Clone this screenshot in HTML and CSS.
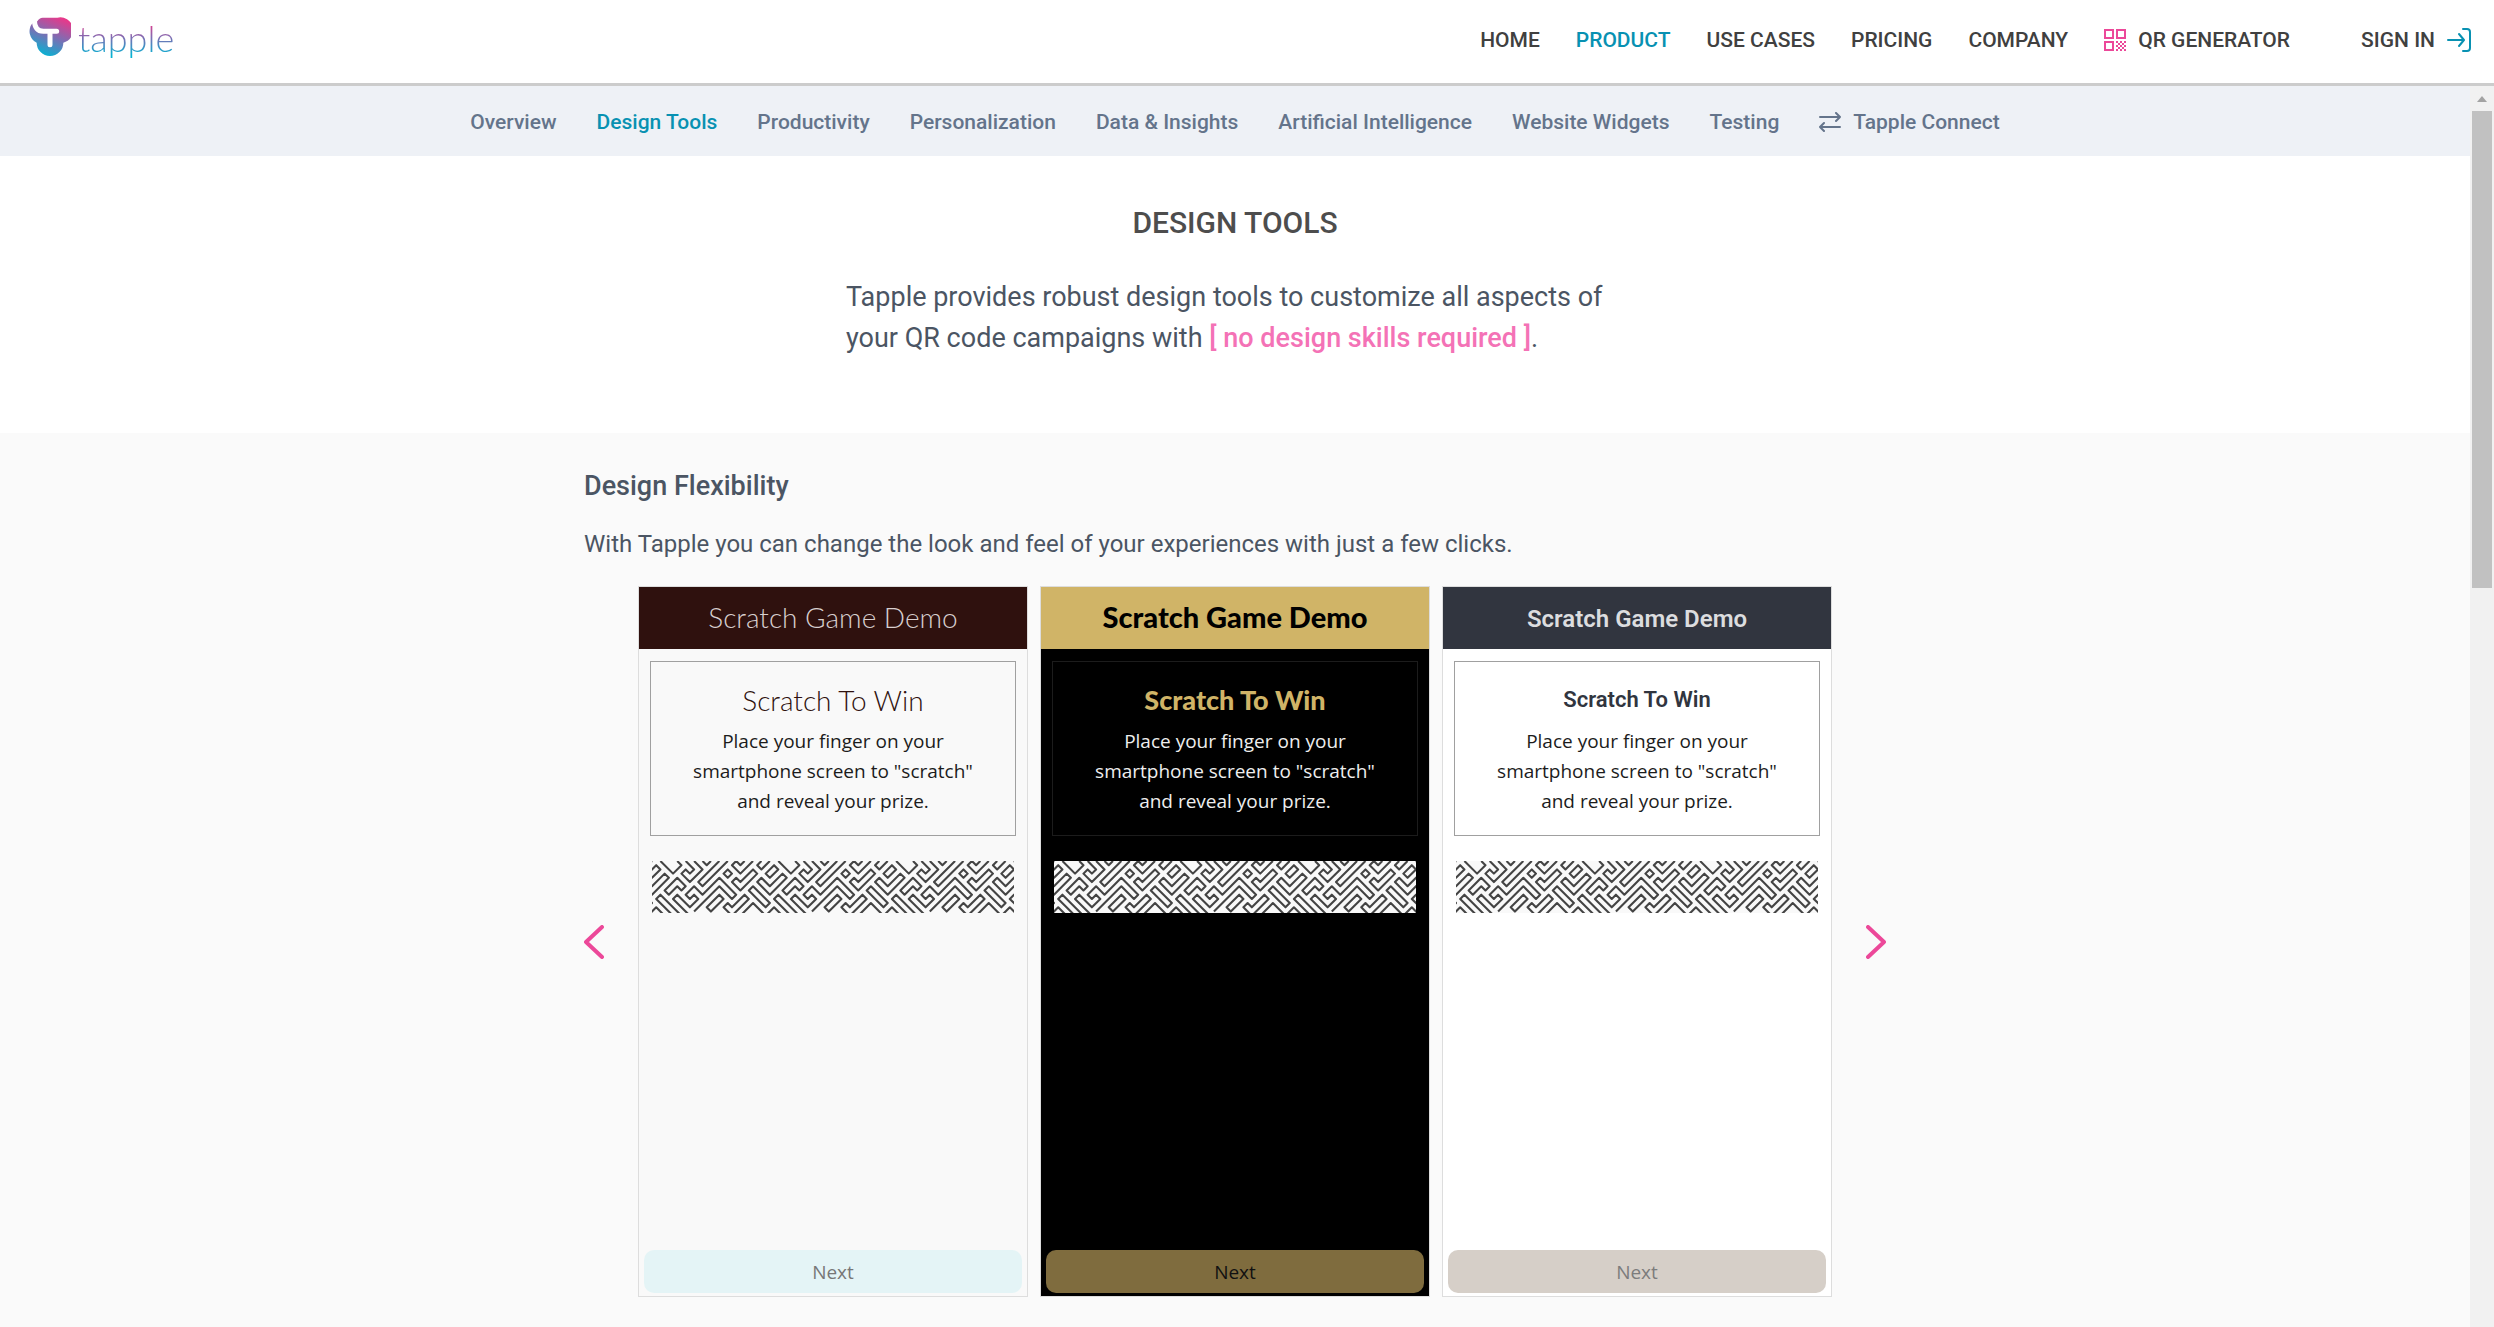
FILE: index.html
```html
<!DOCTYPE html>
<html lang="en">
<head>
<meta charset="utf-8">
<meta name="viewport" content="width=device-width, initial-scale=1">
<title>Tapple - Design Tools</title>
<link rel="stylesheet" href="styles.css">
</head>
<body>
<header class="topbar">
  <a class="brand" href="#" aria-label="tapple home">
    <svg class="brand-mark" viewBox="88 47 124 126" aria-hidden="true">
      <defs>
        <linearGradient id="brand-fill" x1="0.8" y1="0.05" x2="0.35" y2="1">
          <stop offset="0" stop-color="#e8388a"/>
          <stop offset="0.5" stop-color="#7a6fb4"/>
          <stop offset="1" stop-color="#05b3d3"/>
        </linearGradient>
      </defs>
      <path fill="url(#brand-fill)" d="M128 49H172A38 38 0 0 1 190 124A40 40 0 1 1 110 124A38 38 0 0 1 97 66L112 60Q118 49 128 49Z"/>
      <path fill="none" stroke="#fff" stroke-width="15" stroke-linecap="round" d="M103 56Q104 90 130 90H170M150 90V130"/>
    </svg>
    <span class="brand-name">tapple</span>
  </a>
  <nav class="main-nav" aria-label="Main">
    <a href="#">HOME</a>
    <a href="#" class="active">PRODUCT</a>
    <a href="#">USE CASES</a>
    <a href="#">PRICING</a>
    <a href="#">COMPANY</a>
    <a href="#" class="with-icon">
      <svg class="qr-icon" viewBox="0 0 22 22" aria-hidden="true">
        <path fill="none" stroke="#ec4899" stroke-width="2" d="M1 1H9V9H1ZM13 1H21V9H13ZM1 13H9V21H1Z"/>
        <path fill="#ec4899" d="M12 12h2v2h-2zM16 12h2v2h-2zM20 12h2v2h-2zM14 14h2v2h-2zM18 14h2v2h-2zM12 16h2v2h-2zM16 16h2v2h-2zM20 16h2v2h-2zM14 18h2v2h-2zM18 18h2v2h-2zM12 20h2v2h-2zM16 20h2v2h-2zM20 20h2v2h-2z"/>
      </svg>
      QR GENERATOR
    </a>
    <a href="#" class="with-icon sign-in">
      SIGN IN
      <svg class="sign-icon" viewBox="0 0 24 24" aria-hidden="true">
        <path fill="none" stroke="#0891b2" stroke-width="2" stroke-linecap="round" stroke-linejoin="round" d="M1 12H17M12 6L17 12L12 18M16 1H20Q23 1 23 4V20Q23 23 20 23H16"/>
      </svg>
    </a>
  </nav>
</header>

<div class="viewport">
  <main class="page">
    <nav class="sub-nav" aria-label="Product">
      <a href="#">Overview</a>
      <a href="#" class="active">Design Tools</a>
      <a href="#">Productivity</a>
      <a href="#">Personalization</a>
      <a href="#">Data &amp; Insights</a>
      <a href="#">Artificial Intelligence</a>
      <a href="#">Website Widgets</a>
      <a href="#">Testing</a>
      <a href="#" class="with-icon">
        <svg class="swap-icon" viewBox="0 0 22 20" aria-hidden="true">
          <path fill="none" stroke="currentColor" stroke-width="2" stroke-linecap="round" stroke-linejoin="round" d="M1 5H21M17 1L21 5L17 9M21 15H1M5 11L1 15L5 19"/>
        </svg>
        Tapple Connect
      </a>
    </nav>

    <section class="hero">
      <h1>DESIGN TOOLS</h1>
      <p>Tapple provides robust design tools to customize all aspects of your QR code campaigns with <strong>[ no design skills required ]</strong>.</p>
    </section>

    <section class="feature">
      <div class="feature-inner">
        <h2>Design Flexibility</h2>
        <p>With Tapple you can change the look and feel of your experiences with just a few clicks.</p>

        <svg class="defs" aria-hidden="true">
          <defs>
            <path id="maze-tile" d="M-16 -2L-13 1L-11 -1L-12 -2
              M-10 -2L-8 0L-9 1L-10 0L-11 1L-9 3L-6 0L-8 -2
              M-6 -2L-5 -1L-4 -2
              M-2 -2L-7 3L-6 4L0 -2
              M0 0L1 1L0 2L-1 1Z
              M4 -2L3 -1L2 -2L1 -1L3 1L6 -2
              M2 2L1 3L3 5L7 1L6 0L3 3Z
              M11 -1L9 1L10 2L12 0Z
              M8 -2L7 -1L8 0L10 -2
              M8 2L7 3L10 6L14 2L13 1L10 4Z
              M-12 2L-15 5L-14 6L-12 4L-11 5L-10 4Z
              M-8 10L-2 4L1 7L2 6L-2 2L-6 6L-8 4L-10 6L-9 7L-8 6L-7 7L-9 9L-12 6L-13 7L-9 11
              M-13 11L-17 7L-16 6L-11 11
              M-19 11L-17 9L-15 11
              M-5 9L-2 6L-1 7L-4 10Z
              M-1 9L0 8L1 9L4 6L5 7L1 11Z
              M5 5L6 4L10 8L9 9Z
              M3 11L6 8L9 11"/>
            <symbol id="maze" viewBox="0 0 86 13" preserveAspectRatio="xMinYMin slice">
              <g fill="none" stroke="#444" stroke-width="0.5" stroke-linejoin="round">
                <use href="#maze-tile" x="-10" y="2"/>
                <use href="#maze-tile" x="18" y="2"/>
                <use href="#maze-tile" x="46" y="2"/>
                <use href="#maze-tile" x="74" y="2"/>
                <use href="#maze-tile" x="102" y="2"/>
              </g>
            </symbol>
          </defs>
        </svg>

        <div class="carousel">
          <button type="button" class="arrow" aria-label="Previous">
            <svg viewBox="0 0 20 34" aria-hidden="true"><path d="M18 2L2 17L18 32"/></svg>
          </button>
          <div class="cards">
            <article class="card card-cocoa">
              <h3>Scratch Game Demo</h3>
              <div class="prompt">
                <h4>Scratch To Win</h4>
                <p>Place your finger on your smartphone screen to "scratch" and reveal your prize.</p>
              </div>
              <svg class="scratch" aria-hidden="true"><use href="#maze"/></svg>
              <button type="button" class="next">Next</button>
            </article>
            <article class="card card-gold">
              <h3>Scratch Game Demo</h3>
              <div class="prompt">
                <h4>Scratch To Win</h4>
                <p>Place your finger on your smartphone screen to "scratch" and reveal your prize.</p>
              </div>
              <svg class="scratch" aria-hidden="true"><use href="#maze"/></svg>
              <button type="button" class="next">Next</button>
            </article>
            <article class="card card-slate">
              <h3>Scratch Game Demo</h3>
              <div class="prompt">
                <h4>Scratch To Win</h4>
                <p>Place your finger on your smartphone screen to "scratch" and reveal your prize.</p>
              </div>
              <svg class="scratch" aria-hidden="true"><use href="#maze"/></svg>
              <button type="button" class="next">Next</button>
            </article>
          </div>
          <button type="button" class="arrow" aria-label="Next slide">
            <svg viewBox="0 0 20 34" aria-hidden="true"><path d="M2 2L18 17L2 32"/></svg>
          </button>
        </div>
      </div>
    </section>
  </main>
  <div class="scrollbar" aria-hidden="true">
    <span class="scroll-up"></span>
    <span class="scroll-thumb"></span>
  </div>
</div>
</body>
</html>
```

FILE: styles.css
```css
* {
  box-sizing: border-box;
}

body {
  margin: 0;
  height: 100vh;
  display: flex;
  flex-direction: column;
  overflow: hidden;
  font-family: Roboto, "Liberation Sans", sans-serif;
  color: #4b5563;
  background: #fff;
}

h1, h2, h3, h4, p {
  margin: 0;
}

a {
  color: inherit;
  text-decoration: none;
  white-space: nowrap;
}

button {
  border: 0;
  padding: 0;
  background: none;
  cursor: pointer;
}

/* Top bar */
.topbar {
  flex: none;
  display: flex;
  align-items: center;
  justify-content: space-between;
  height: 86px;
  padding: 0 23px 4px 29px;
  border-bottom: 3px solid #ccc;
}

.brand {
  display: flex;
  align-items: center;
  gap: 7px;
  padding-bottom: 4px;
}

.brand-mark {
  width: 42px;
  height: 42px;
}

.brand-name {
  font-family: Lato, sans-serif;
  font-weight: 300;
  font-size: 36px;
  line-height: 44px;
  color: transparent;
  background: linear-gradient(#e8388a 15%, #7a6fb4 50%, #05b3d3 90%);
  -webkit-background-clip: text;
  background-clip: text;
}

.main-nav {
  display: flex;
  align-items: center;
  gap: 36px;
  font-size: 21px;
  font-weight: 500;
  color: #404040;
}

.active {
  color: #0891b2;
}

.with-icon {
  display: flex;
  align-items: center;
  gap: 12px;
}

.sign-in {
  margin-left: 35px;
}

.qr-icon {
  width: 22px;
  height: 22px;
}

.sign-icon {
  width: 24px;
  height: 24px;
}

/* Scrolling area */
.viewport {
  flex: 1;
  min-height: 0;
  display: flex;
}

.page {
  flex: 1;
  min-width: 0;
  display: flex;
  flex-direction: column;
  overflow: hidden;
}

.scrollbar {
  flex: none;
  width: 24px;
  padding: 10px 2px 0;
  display: flex;
  flex-direction: column;
  gap: 9px;
  background: #f1f1f1;
}

.scroll-up {
  align-self: center;
  border: 5px solid transparent;
  border-top: 0;
  border-bottom: 6px solid #a3a3a3;
}

.scroll-thumb {
  height: 477px;
  background: #c1c1c1;
}

.sub-nav {
  flex: none;
  display: flex;
  align-items: center;
  justify-content: center;
  gap: 40px;
  height: 70px;
  padding-top: 1px;
  background: #eef1f6;
  font-size: 21px;
  font-weight: 500;
  color: #64748b;
}

.sub-nav .active {
  color: #0891b2;
}

.swap-icon {
  width: 22px;
  height: 20px;
}

/* Intro */
.hero {
  flex: none;
  padding: 47px 24px 74px;
  text-align: center;
}

.hero h1 {
  font-size: 30px;
  line-height: 40px;
  font-weight: 500;
  color: #4d4d4d;
}

.hero p {
  max-width: 780px;
  margin: 34px auto 0;
  padding-left: 1px;
  font-size: 27px;
  line-height: 41px;
  text-align: left;
}

.hero strong {
  font-weight: 500;
  color: #f472b6;
}

/* Feature */
.feature {
  flex: 1 0 auto;
  padding: 33px 24px 30px;
  background: #fafafa;
}

.feature-inner {
  max-width: 1302px;
  margin: 0 auto;
}

.feature h2 {
  font-size: 27px;
  line-height: 40px;
  font-weight: 500;
}

.feature-inner > p {
  margin: 20px 0 24px;
  font-size: 24px;
  line-height: 36px;
}

.defs {
  display: block;
  width: 0;
  height: 0;
}

.carousel {
  display: flex;
  align-items: center;
  gap: 34px;
}

.arrow {
  flex: none;
  width: 20px;
  height: 34px;
}

.arrow svg {
  display: block;
  width: 20px;
  height: 34px;
  fill: none;
  stroke: #ec4899;
  stroke-width: 4;
  stroke-linecap: round;
  stroke-linejoin: round;
}

.cards {
  flex: 1;
  display: flex;
  gap: 12px;
}

.card {
  flex: 1;
  min-width: 0;
  height: 711px;
  display: flex;
  flex-direction: column;
  border: 1px solid #ddd;
  font-family: "Open Sans", "Noto Sans", sans-serif;
  color: #1c1c1c;
}

.card h3 {
  height: 62px;
  font-size: 28px;
  line-height: 60px;
  text-align: center;
}

.prompt {
  height: 175px;
  margin: 12px 11px 0;
  padding: 20px 24px;
  border: 1px solid #a0a0a0;
  text-align: center;
}

.prompt h4 {
  font-size: 27px;
  line-height: 36px;
}

.prompt p {
  max-width: 300px;
  margin: 8px auto 0;
  font-size: 19px;
  line-height: 30px;
}

.scratch {
  flex: none;
  width: auto;
  height: 52px;
  margin: 25px 13px 0;
  background: #f9f9f9;
}

.next {
  height: 43px;
  margin: auto 5px 3px;
  border-radius: 10px;
  font-family: inherit;
  font-size: 19px;
  font-weight: 500;
}

.card-cocoa {
  background: #f9f9f9;
}

.card-cocoa h3,
.card-cocoa h4 {
  font-family: Lato, sans-serif;
  font-size: 28px;
  font-weight: 300;
}

.card-cocoa h3 {
  background: #2f110e;
  color: #d8cfce;
}

.card-cocoa h4 {
  color: #2f110e;
}

.card-cocoa .next {
  background: #e4f4f6;
  color: #777;
}

.card-gold {
  background: #000;
  color: #eee;
}

.card-gold h3,
.card-gold h4 {
  font-family: Lato, sans-serif;
  font-weight: 900;
}

.card-gold h3 {
  font-size: 29px;
  background: #d0b467;
  color: #000;
}

.card-gold h4 {
  color: #d0b467;
}

.card-gold .prompt {
  border-color: #1c1c1c;
}

.card-gold .next {
  background: #7f6c3e;
  color: #111;
}

.card-slate {
  background: #fff;
}

.card-slate h3,
.card-slate h4 {
  font-weight: 600;
  font-family: Roboto, sans-serif;
}

.card-slate h3 {
  font-size: 24px;
  line-height: 64px;
  background: #31353f;
  color: #dcdddf;
}

.card-slate h4 {
  font-size: 22px;
  color: #31353f;
}

.card-slate .next {
  background: #d6cfc8;
  color: #7c7c7c;
}
```
